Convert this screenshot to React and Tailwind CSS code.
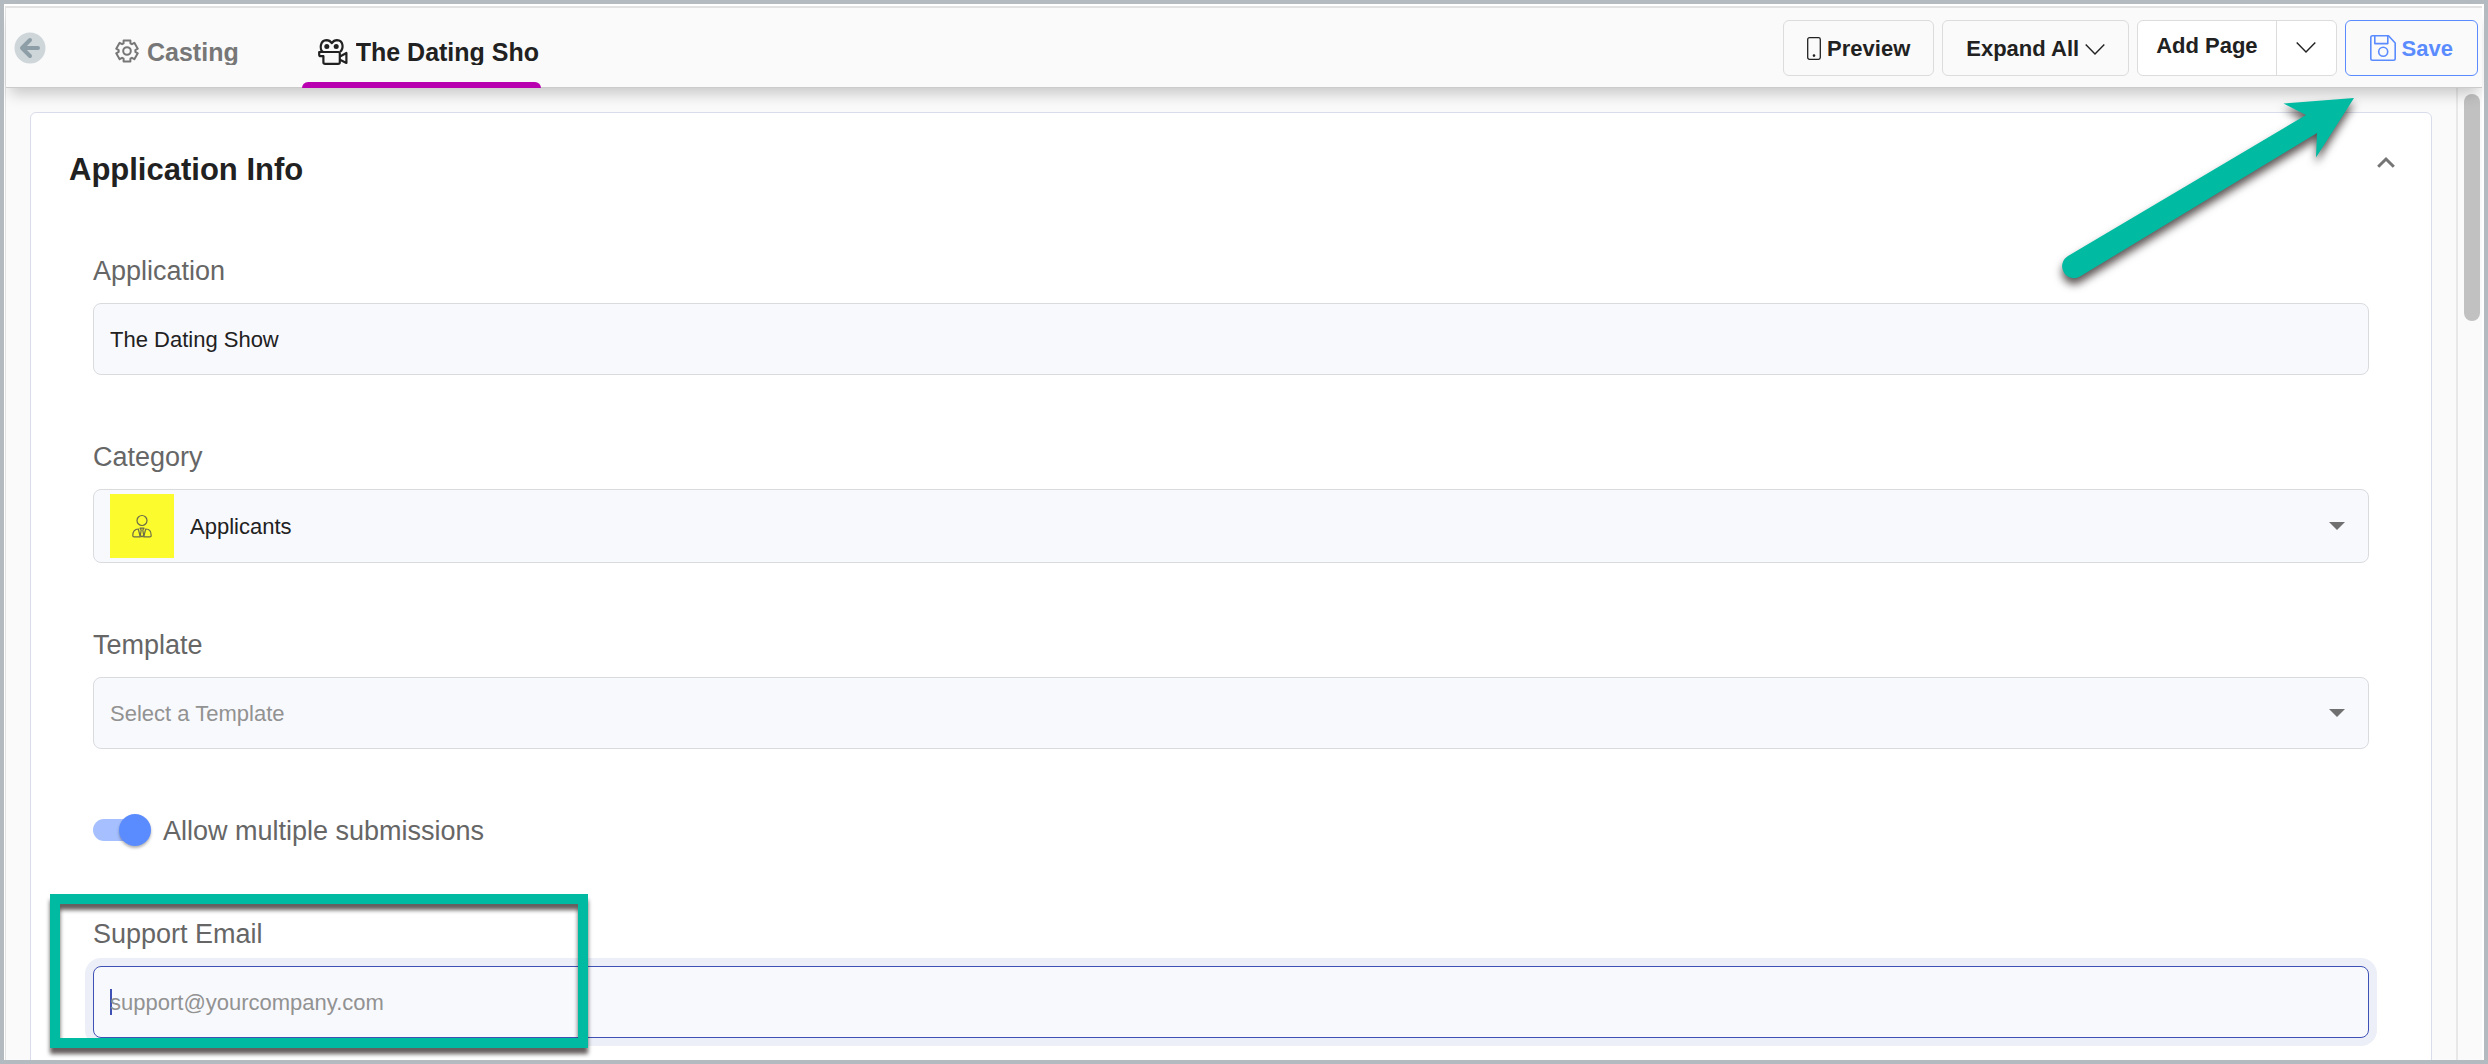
import { useState } from 'react';

const gearPoints = [0, 60, 120, 180, 240, 300]
  .flatMap((tooth) => [
    [tooth - 24, 8.4],
    [tooth - 18, 11],
    [tooth + 18, 11],
    [tooth + 24, 8.4],
  ])
  .map(([angle, radius]) => {
    const rad = (angle * Math.PI) / 180;
    return `${(12 + radius * Math.sin(rad)).toFixed(2)},${(12 - radius * Math.cos(rad)).toFixed(2)}`;
  })
  .join(' ');

const GearIcon = () => (
  <svg className="size-6 shrink-0" viewBox="0 0 24 24" fill="none" stroke="currentColor" strokeWidth="2" strokeLinejoin="round">
    <polygon points={gearPoints} />
    <circle cx="12" cy="12" r="3.8" />
  </svg>
);

const CameraIcon = () => (
  <svg className="h-[26px] w-[30px] shrink-0" viewBox="0 0 30 26" fill="none" stroke="currentColor" strokeWidth="2.2" strokeLinejoin="round">
    <path d="M5 13C1.400 10.500 1.800 1.500 8.500 1.200C11.500 1.200 13 3 13.800 4.200C14.600 3 16.200 1.200 19 1.200C25.500 1.500 26 9.500 22 13" />
    <circle cx="8.800" cy="7.600" r="2.500" fill="currentColor" stroke="none" />
    <circle cx="18.200" cy="7.600" r="2.500" fill="currentColor" stroke="none" />
    <path d="M1.200 13H20.500Q21.800 13 21.800 14.300V23.200Q21.800 24.800 20 24.800H7.200Q5.400 24.800 5.400 23.200V17.200H2.600Q1.200 17.200 1.200 15.800Z" />
    <path d="M22 17.500L28.400 14V24L22 20.800" />
  </svg>
);

const BackIcon = () => (
  <svg className="size-8" viewBox="0 0 32 32" fill="none">
    <circle cx="16" cy="16" r="15.500" fill="#cfd6da" />
    <path d="M24 16H8M16 8L8 16L16 24" stroke="#8d9ea7" strokeWidth="4" strokeLinecap="round" strokeLinejoin="round" />
  </svg>
);

const PhoneIcon = () => (
  <svg className="h-6 w-3.5" viewBox="0 0 14 24" fill="none" stroke="currentColor" strokeWidth="1.300">
    <rect x="0.700" y="1.700" width="12.600" height="21.600" rx="1.800" />
    <circle cx="7" cy="19.600" r="1.300" fill="currentColor" stroke="none" />
  </svg>
);

const ThinChevron = () => (
  <svg className="h-4 w-5" viewBox="0 0 20 16" fill="none" stroke="currentColor" strokeWidth="1.400">
    <path d="M0.700 4.500L10 14L19.300 4.500" />
  </svg>
);

const DiskIcon = () => (
  <svg className="size-[26px]" viewBox="0 0 26 26" fill="none" stroke="currentColor" strokeWidth="1.600" strokeLinejoin="round">
    <path d="M2.500 0.800H18.500L25.200 8V23.500Q25.200 25.200 23.500 25.200H2.500Q0.800 25.200 0.800 23.500V2.500Q0.800 0.800 2.500 0.800Z" />
    <path d="M4.800 0.800V8.600H17.800V0.800" />
    <circle cx="13.200" cy="16.800" r="4.500" />
  </svg>
);

const PersonIcon = () => (
  <svg className="h-6 w-5" viewBox="0 0 20 24" fill="none" stroke="currentColor" strokeWidth="1.200" strokeLinejoin="round">
    <circle cx="10" cy="6.500" r="5" />
    <path d="M6.300 15C2.500 15 0.800 18 0.800 21.500Q0.800 22.800 2 22.800H8.300L6.300 15Z" />
    <path d="M13.700 15C17.500 15 19.200 18 19.200 21.500Q19.200 22.800 18 22.800H11.700L13.700 15Z" />
    <path d="M8 14.200H12L10.800 16L11.700 21.500L10 22.800L8.300 21.500L9.200 16Z" />
  </svg>
);

const Caret = () => (
  <svg className="pointer-events-none absolute right-[23px] h-2 w-4" viewBox="0 0 16 8" fill="#707070">
    <path d="M0 0H16L8 8Z" />
  </svg>
);

const labelClass = 'text-[27px] leading-8 text-[#666]';
const fieldClass = 'relative flex items-center rounded-lg border border-[#d9dbdf] bg-[#f8f9fd] text-[22px]';

const Header = () => (
  <header className="relative z-10 flex h-20 shrink-0 justify-between bg-[#fafafa] pr-1 pl-2 shadow-[inset_0_-1px_0_#cbcbcb,0_10px_14px_-4px_rgba(0,0,0,0.2)]">
    <div className="flex">
      <button aria-label="Back" className="mt-6 self-start">
        <BackIcon />
      </button>
      <nav className="ml-[53px] flex gap-[63px] text-[25px] leading-[26px] font-bold">
        <a href="#casting" className="flex items-start gap-2 pt-[31px] pl-4 text-[#777]">
          <GearIcon />
          <span className="overflow-hidden">Casting</span>
        </a>
        <a href="#application" className="relative flex items-start gap-2 pt-[31px] pr-0.5 pl-4 text-[#212121]">
          <CameraIcon />
          <span className="overflow-hidden">The Dating Sho</span>
          <span className="absolute inset-x-0 bottom-0 h-1.5 rounded-t-md bg-[#b800b0]" />
        </a>
      </nav>
    </div>

    {/* Actions */}
    <div className="mt-3 flex h-14 gap-2 text-[22px] font-bold text-[#212121]">
      <button className="flex items-center gap-1.5 rounded-md border border-[#dcdcdc] px-[23px]">
        <PhoneIcon />
        Preview
      </button>
      <button className="flex items-center gap-1.5 rounded-md border border-[#dcdcdc] px-[23px]">
        Expand All
        <ThinChevron />
      </button>
      <div className="flex rounded-md border border-[#dcdcdc] bg-white">
        <button className="px-[18px] pb-1.5">Add Page</button>
        <button aria-label="More page options" className="flex w-[60px] items-center justify-center border-l border-[#dcdcdc] pb-1">
          <ThinChevron />
        </button>
      </div>
      <button className="flex items-center gap-1.5 rounded-md border border-[#5b8cff] px-6 text-[#5b8cff]">
        <DiskIcon />
        Save
      </button>
    </div>
  </header>
);

const App = () => {
  const [name, setName] = useState('The Dating Show');
  const [email, setEmail] = useState('');
  const [multiple, setMultiple] = useState(true);

  return (
    <div className="relative h-screen overflow-hidden border-4 border-[#b3bbc1] bg-white font-['Liberation_Sans',Arial,sans-serif]">
      <div className="mt-0.5 mr-0.5 ml-px flex h-full flex-col border-t-2 border-l border-[#e2e2e2] bg-[#fafafa]">
        <Header />

        <div className="flex min-h-0 flex-1">
          <main className="min-w-0 flex-1 overflow-hidden px-6 pt-6">
            <section className="rounded-md border border-[#d9dcea] bg-white pt-[37px] pb-24">
              <div className="flex items-start justify-between pr-[33px] pl-[38px]">
                <h1 className="text-[31px] leading-10 font-bold text-[#212121]">Application Info</h1>
                <button aria-label="Collapse" className="flex size-6 items-center justify-center">
                  <svg className="h-3 w-[18px]" viewBox="0 0 18 12" fill="none" stroke="#757575" strokeWidth="3">
                    <path d="M1.200 10.800L9 3L16.800 10.800" />
                  </svg>
                </button>
              </div>

              {/* Fields */}
              <form className="mt-[65px] flex flex-col gap-[66px] px-[62px]">
                <div className="flex flex-col gap-4">
                  <label htmlFor="application" className={labelClass}>Application</label>
                  <div className={`${fieldClass} h-[72px] px-4`}>
                    <input
                      id="application"
                      className="w-full text-[#212121] outline-none"
                      value={name}
                      onChange={(e) => setName(e.target.value)}
                    />
                  </div>
                </div>

                <div className="flex flex-col gap-4">
                  <label htmlFor="category" className={labelClass}>Category</label>
                  <div className={`${fieldClass} h-[74px] gap-4 px-4`}>
                    <span className="flex size-16 shrink-0 items-center justify-center bg-[#fbfb2e] text-[#6b6b4a]">
                      <PersonIcon />
                    </span>
                    <select id="category" className="w-full appearance-none text-[#212121] outline-none">
                      <option>Applicants</option>
                    </select>
                    <Caret />
                  </div>
                </div>

                <div className="flex flex-col gap-4">
                  <label htmlFor="template" className={labelClass}>Template</label>
                  <div className={`${fieldClass} h-[72px] px-4`}>
                    <select id="template" className="w-full appearance-none text-[#929292] outline-none">
                      <option>Select a Template</option>
                    </select>
                    <Caret />
                  </div>
                </div>

                <div className="flex h-[37px] items-start gap-3.5">
                  <input
                    id="multiple"
                    type="checkbox"
                    role="switch"
                    checked={multiple}
                    onChange={(e) => setMultiple(e.target.checked)}
                    className="relative mt-1 h-[22px] w-14 appearance-none rounded-full bg-[#c4c4c4] outline-none before:absolute before:-top-[5px] before:left-0 before:size-8 before:rounded-full before:bg-white before:shadow-[0_2px_3px_rgba(0,0,0,0.3)] checked:bg-[#a6c0ff] checked:before:left-[26px] checked:before:bg-[#5b8cff]"
                  />
                  <label htmlFor="multiple" className={labelClass}>Allow multiple submissions</label>
                </div>

                <div className="relative flex flex-col gap-4">
                  <label htmlFor="email" className={labelClass}>Support Email</label>
                  <div className="relative flex h-[72px] items-center rounded-lg border border-[#3f51b5] bg-[#f8f9fd] px-4 text-[22px] shadow-[0_0_0_8px_#eceff8]">
                    <span className="h-[26px] w-0.5 shrink-0 bg-[#3f51b5]" />
                    <input
                      id="email"
                      type="email"
                      placeholder="support@yourcompany.com"
                      className="-ml-0.5 w-full text-[#212121] outline-none placeholder:text-[#929292]"
                      value={email}
                      onChange={(e) => setEmail(e.target.value)}
                    />
                  </div>
                  {/* Callout frame */}
                  <div className="pointer-events-none absolute -top-6 -left-[43px] h-[154px] w-[538px] border-10 border-[#00bba2] drop-shadow-[0_6px_2px_rgba(50,40,40,0.75)]" />
                </div>
              </form>
            </section>
          </main>

          {/* Scrollbar */}
          <div className="w-[26px] shrink-0 border-l-2 border-[#e8e8e8] pt-1.5 pl-1.5">
            <div className="h-[227px] w-4 rounded-full bg-[#c1c1c1]" />
          </div>
        </div>
      </div>

      {/* Arrow pointing at Save */}
      <svg
        className="pointer-events-none absolute top-[86px] right-[114px] z-20 h-[210px] w-80 drop-shadow-[0_6px_4px_rgba(50,40,40,0.8)]"
        viewBox="0 0 320 210"
        fill="#00bba2"
      >
        <path d="M304 8L233.500 13.500L256 25L18 166A11.500 11.500 0 0 0 30 186.500L267 43L266 67.500Z" />
      </svg>
    </div>
  );
};

export default App;
